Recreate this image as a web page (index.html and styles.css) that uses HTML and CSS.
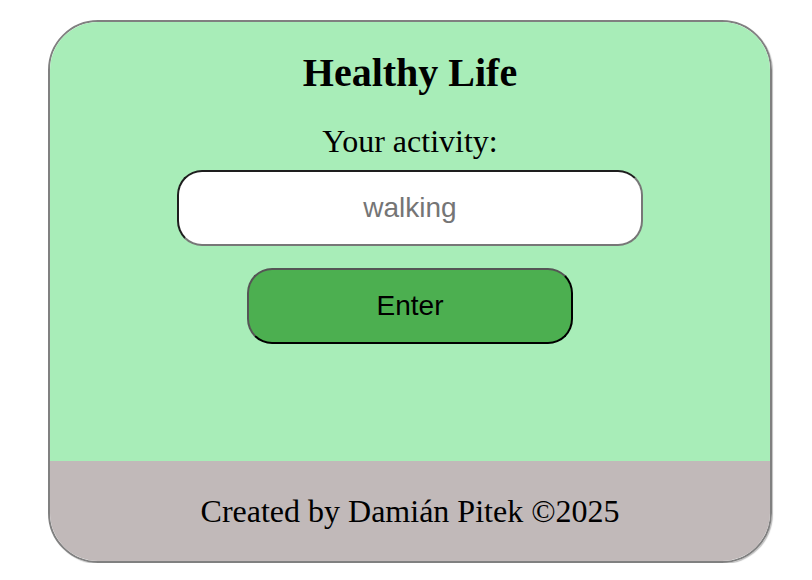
FILE: index.html
```html
<!DOCTYPE html>
<html lang="en">
<head>
<meta charset="utf-8">
<title>Healthy Life</title>
<link rel="stylesheet" href="styles.css">
</head>
<body>
<div class="card">
  <main class="content">
    <h1 class="title">Healthy Life</h1>
    <label class="label" for="activity">Your activity:</label>
    <input class="field" id="activity" type="text" placeholder="walking">
    <button class="btn" type="button">Enter</button>
  </main>
  <footer class="footer">Created by Damián Pitek ©2025</footer>
</div>
</body>
</html>
```
FILE: styles.css
```css
html, body {
  background: #ffffff;
}
body {
  margin: 20px 0 0 48px;
  font-family: "Liberation Serif", "Times New Roman", serif;
  color: #000;
}
.card {
  width: 720px;
  border: 2px solid #808080;
  border-radius: 50px;
  overflow: hidden;
  box-shadow: 1px 1px 1px rgba(0, 0, 0, 0.25);
  display: flex;
  flex-direction: column;
}
.content {
  background: #a8edb8;
  height: 439px;
  display: flex;
  flex-direction: column;
  align-items: center;
  box-sizing: border-box;
  padding-top: 28px;
}
.title {
  margin: 0;
  font-size: 40px;
  font-weight: bold;
  line-height: 46px;
}
.label {
  margin-top: 27px;
  font-size: 32px;
  line-height: 37px;
}
.field {
  margin-top: 10px;
  box-sizing: border-box;
  width: 466px;
  height: 76px;
  border-radius: 25px;
  border: 2px solid;
  border-color: #1e1e1e #777777 #777777 #1e1e1e;
  background: #fff;
  font-family: "Liberation Sans", Arial, sans-serif;
  font-size: 28px;
  text-align: center;
  outline: none;
  padding: 0 10px;
}
.field::placeholder {
  color: #757575;
}
.btn {
  margin-top: 22px;
  box-sizing: border-box;
  width: 326px;
  height: 76px;
  border-radius: 25px;
  border: 2px solid;
  border-color: #555555 #000000 #000000 #555555;
  background: #4caf50;
  font-family: "Liberation Sans", Arial, sans-serif;
  font-size: 28px;
  color: #000;
  padding: 0;
}
.footer {
  background: #c1b9b9;
  height: 100px;
  box-sizing: border-box;
  padding-top: 32px;
  text-align: center;
  font-size: 32px;
  line-height: 37px;
}
```
